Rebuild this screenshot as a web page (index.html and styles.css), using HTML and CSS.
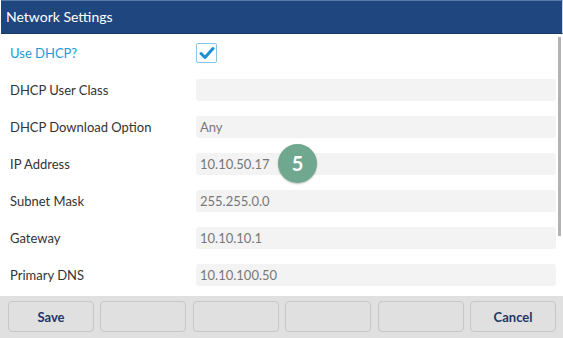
FILE: index.html
```html
<!DOCTYPE html>
<html lang="en">
  <head>
    <meta charset="UTF-8" />
    <title>Network Settings</title>
    <link rel="stylesheet" href="styles.css">
  </head>
  <body>
    <div class="screen">
      <header class="title-bar">Network Settings</header>

      <div class="content">
        <div class="settings-list">
          <div class="row">
            <span class="label active">Use DHCP?</span>
            <span class="checkbox">
              <svg width="16" height="14" viewBox="0 0 16 14">
                <path d="M2 7.5 L6 11.5 L14 2.5" fill="none" stroke="#1b8fd2" stroke-width="3" stroke-linecap="round" stroke-linejoin="round" />
              </svg>
            </span>
          </div>
          <div class="row">
            <span class="label">DHCP User Class</span>
            <span class="field"></span>
          </div>
          <div class="row">
            <span class="label">DHCP Download Option</span>
            <span class="field">Any</span>
          </div>
          <div class="row">
            <span class="label">IP Address</span>
            <span class="field">10.10.50.17
              <span class="badge">5</span>
            </span>
          </div>
          <div class="row">
            <span class="label">Subnet Mask</span>
            <span class="field">255.255.0.0</span>
          </div>
          <div class="row">
            <span class="label">Gateway</span>
            <span class="field">10.10.10.1</span>
          </div>
          <div class="row">
            <span class="label">Primary DNS</span>
            <span class="field">10.10.100.50</span>
          </div>
        </div>

        <div class="scroll-track">
          <div class="scroll-thumb"></div>
        </div>
      </div>

      <footer class="softkeys">
        <button class="key">Save</button>
        <button class="key"></button>
        <button class="key"></button>
        <button class="key"></button>
        <button class="key"></button>
        <button class="key">Cancel</button>
      </footer>
    </div>
  </body>
</html>
```

FILE: styles.css
```css
body {
  margin: 0;
  font-family: Lato, "Open Sans", sans-serif;
  background: #fff;
}

.screen {
  width: 563px;
  height: 338px;
  display: flex;
  flex-direction: column;
  overflow: hidden;
}

/* Barra de titulo */
.title-bar {
  height: 34px;
  box-sizing: border-box;
  margin-left: 1px;
  padding-left: 5px;
  background: #1f467e;
  border-top: 1px solid #5a7aa8;
  border-bottom: 1px solid #173a6c;
  border-right: 1px solid #c9d6e6;
  color: #fff;
  font-size: 14px;
  line-height: 32px;
}

.content {
  flex: 1;
  display: flex;
  gap: 2px;
  min-height: 0;
  overflow: hidden;
}

.settings-list {
  width: 556px;
}

.row {
  height: 37px;
  display: grid;
  grid-template-columns: 186px 1fr;
  align-items: center;
  padding-left: 10px;
}

.label {
  font-size: 13px;
  color: #333;
}

.label.active {
  color: #1d9ad8;
}

.checkbox {
  width: 21px;
  height: 20px;
  box-sizing: border-box;
  border: 1px solid #86c4e8;
  border-radius: 2px;
  background: #fff;
  display: flex;
  align-items: center;
  justify-content: center;
}

.field {
  position: relative;
  height: 22px;
  line-height: 22px;
  padding-left: 4px;
  background: #f3f3f3;
  border-radius: 3px;
  font-size: 13px;
  color: #777;
}

/* Marcador numerado encima del campo */
.badge {
  position: absolute;
  left: 82px;
  top: -9px;
  width: 39px;
  height: 39px;
  border-radius: 50%;
  background: #6fa78f;
  box-shadow: 0 1px 2px rgba(0, 0, 0, 0.25);
  color: #fff;
  font-weight: bold;
  font-size: 20px;
  line-height: 39px;
  text-align: center;
}

.scroll-track {
  width: 3px;
  padding-top: 3px;
}

.scroll-thumb {
  height: 199px;
  background: #b3b3b3;
}

/* Teclas inferiores */
.softkeys {
  height: 42px;
  box-sizing: border-box;
  display: flex;
  gap: 6.4px;
  padding: 5px 7px 6px 8px;
  background: #e0e0e0;
}

.key {
  flex: 1;
  margin: 0;
  background: #e0e0e0;
  border: 1px solid #c6c6c6;
  border-radius: 4px;
  font-family: Lato, "Open Sans", sans-serif;
  font-size: 13px;
  font-weight: bold;
  color: #1e3767;
}
```
